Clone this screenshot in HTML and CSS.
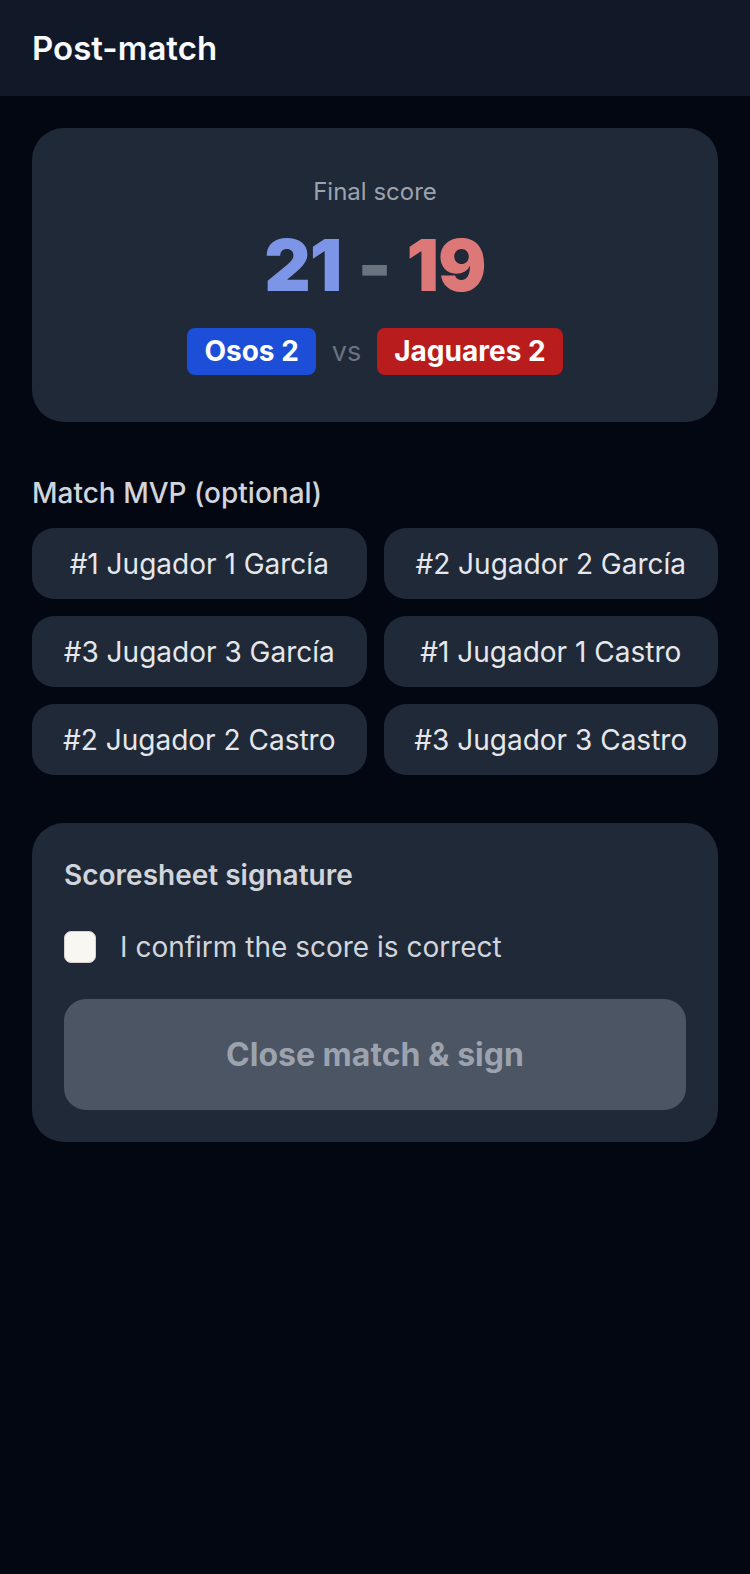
FILE: index.html
```html
<!DOCTYPE html>
<html lang="en">
<head>
<meta charset="utf-8">
<title>Post-match</title>
<link rel="stylesheet" href="styles.css">
</head>
<body>
<header class="topbar"><h1 class="title">Post-match</h1></header>
<main class="content">
  <section class="score-card">
    <div class="score-label">Final score</div>
    <div class="score">
      <span class="pts home">21</span>
      <span class="dash">-</span>
      <span class="pts away">19</span>
    </div>
    <div class="teams">
      <span class="chip chip-home">Osos 2</span>
      <span class="vs">vs</span>
      <span class="chip chip-away">Jaguares 2</span>
    </div>
  </section>

  <section class="mvp">
    <h2 class="section-title">Match MVP (optional)</h2>
    <div class="mvp-grid">
      <button class="mvp-btn">#1 Jugador 1 García</button>
      <button class="mvp-btn">#2 Jugador 2 García</button>
      <button class="mvp-btn">#3 Jugador 3 García</button>
      <button class="mvp-btn">#1 Jugador 1 Castro</button>
      <button class="mvp-btn">#2 Jugador 2 Castro</button>
      <button class="mvp-btn">#3 Jugador 3 Castro</button>
    </div>
  </section>

  <section class="sign-card">
    <h2 class="sign-title">Scoresheet signature</h2>
    <label class="confirm">
      <span class="box"></span>
      <span class="confirm-text">I confirm the score is correct</span>
    </label>
    <button class="close-btn" disabled>Close match &amp; sign</button>
  </section>
</main>
</body>
</html>
```

FILE: styles.css
```css
* { box-sizing: border-box; }
html, body { margin: 0; padding: 0; }
body {
  background: #030712;
  font-family: Inter, "Noto Sans", sans-serif;
  color: #e5e7eb;
  min-height: 1574px;
}
.topbar {
  background: #111827;
  height: 96px;
  display: flex;
  align-items: center;
  padding: 0 32px;
}
.title {
  margin: 0;
  font-size: 33px;
  font-weight: 600;
  color: #f9fafb;
}
.content {
  padding: 32px;
  display: flex;
  flex-direction: column;
}
.score-card {
  background: #1f2937;
  border-radius: 32px;
  height: 294px;
  padding-top: 48px;
  display: flex;
  flex-direction: column;
  align-items: center;
}
.score-label {
  font-size: 24px;
  color: #9ca3af;
  line-height: 32px;
}
.score {
  display: flex;
  align-items: center;
  gap: 16px;
  margin-top: 9px;
  line-height: 96px;
  font-size: 72px;
  font-weight: 900;
  letter-spacing: -1px;
}
.home { color: #7c95e6; }
.away { color: #dc7878; }
.dash { color: #6b7280; }
.teams {
  display: flex;
  align-items: center;
  gap: 16px;
  margin-top: 15px;
}
.chip {
  font-size: 28px;
  font-weight: 700;
  color: #ffffff;
  line-height: 39px;
  padding: 4px 17px;
  border-radius: 8px;
}
.chip-home { background: #1d4ed8; }
.chip-away { background: #b91c1c; }
.vs { font-size: 27px; color: #6b7280; }

.mvp { margin-top: 50px; }
.section-title {
  margin: 0 0 14px;
  font-size: 28px;
  font-weight: 500;
  color: #d1d5db;
  line-height: 42px;
}
.mvp-grid {
  display: grid;
  grid-template-columns: 1fr 1fr;
  gap: 17px 17px;
}
.mvp-btn {
  height: 71px;
  border: 0;
  border-radius: 22px;
  background: #1f2937;
  color: #e5e7eb;
  font-family: Inter, "Noto Sans", sans-serif;
  font-size: 28px;
  font-weight: 400;
  padding: 0;
}

.sign-card {
  margin-top: 48px;
  background: #1f2937;
  border-radius: 32px;
  padding: 32px;
}
.sign-title {
  margin: 0;
  font-size: 28px;
  font-weight: 600;
  color: #d1d5db;
  line-height: 40px;
}
.confirm {
  display: flex;
  align-items: center;
  gap: 24px;
  margin-top: 32px;
}
.box {
  width: 32px;
  height: 32px;
  background: #f8f7f2;
  border: 1px solid #d6d3cc;
  border-radius: 7px;
}
.confirm-text {
  font-size: 28px;
  color: #d1d5db;
  line-height: 40px;
}
.close-btn {
  margin-top: 32px;
  width: 100%;
  height: 111px;
  border: 0;
  border-radius: 22px;
  background: #4b5563;
  color: #9ca3af;
  font-family: Inter, "Noto Sans", sans-serif;
  font-size: 32px;
  font-weight: 700;
}
```
